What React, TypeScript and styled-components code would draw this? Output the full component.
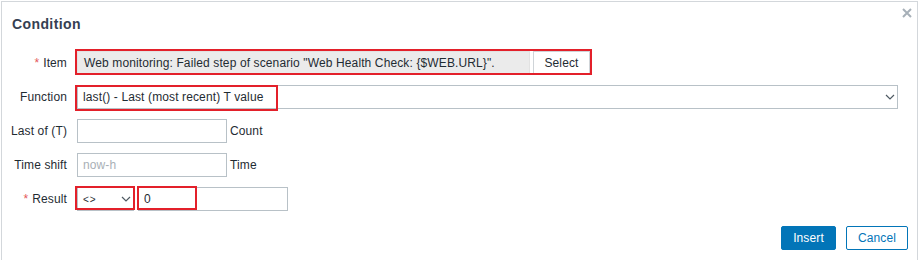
import * as React from "react";
import styled, { createGlobalStyle } from "styled-components";

const GlobalStyle = createGlobalStyle`
  body {
    margin: 0;
    background: #ffffff;
    font-family: "Liberation Sans", Arial, sans-serif;
    font-size: 12px;
    letter-spacing: 0.12px;
    color: #1f2c33;
  }
`;

const Dialog = styled.div`
  box-sizing: border-box;
  width: 917px;
  height: 259px;
  margin: 1px 0 0 1px;
  border: 1px solid #d3d7db;
  border-bottom: none;
  background: #ffffff;
`;

const Header = styled.div`
  display: flex;
  justify-content: space-between;
  align-items: flex-start;
  padding: 0 5px 0 10px;
`;

const Title = styled.h4`
  margin: 0;
  padding-top: 14px;
  font-size: 14px;
  line-height: 16px;
  font-weight: bold;
  letter-spacing: 0.4px;
  color: #354052;
`;

const Close = styled.button`
  display: flex;
  margin-top: 6px;
  padding: 0;
  border: none;
  background: transparent;
  cursor: pointer;
`;

const Form = styled.div`
  display: grid;
  grid-template-columns: 65px 1fr;
  column-gap: 10px;
  row-gap: 10px;
  margin-top: 19px;
  padding-right: 19px;
`;

const Label = styled.label`
  display: flex;
  align-items: center;
  justify-content: flex-end;
  height: 24px;
  white-space: nowrap;
`;

const Req = styled.span`
  color: #e45959;
  margin-right: 4px;
`;

const Field = styled.div`
  display: flex;
  align-items: center;
  gap: 3px;
  height: 24px;
`;

const Group = styled.div<{ $gap?: number }>`
  position: relative;
  display: flex;
  gap: ${(p) => p.$gap ?? 0}px;
  height: 24px;
`;

const Mark = styled.span<{ $l: number; $t: number; $w: number; $h: number }>`
  position: absolute;
  left: ${(p) => p.$l}px;
  top: ${(p) => p.$t}px;
  width: ${(p) => p.$w}px;
  height: ${(p) => p.$h}px;
  box-sizing: border-box;
  border: 2px solid #e3202a;
  pointer-events: none;
`;

const Input = styled.input<{ $w: number }>`
  box-sizing: border-box;
  width: ${(p) => p.$w}px;
  height: 24px;
  margin: 0;
  padding: 0 5px;
  border: 1px solid #b8c1c7;
  background: #ffffff;
  font-family: inherit;
  font-size: 12px;
  letter-spacing: inherit;
  color: #1f2c33;
  outline: none;
  &::placeholder {
    color: #a9b0b6;
  }
`;

const ReadOnly = styled.div`
  box-sizing: border-box;
  width: 453px;
  height: 24px;
  display: flex;
  align-items: center;
  padding: 0 6px;
  background: #ebebeb;
  border: 1px solid #e2e2e2;
  white-space: nowrap;
  overflow: hidden;
`;

const AltButton = styled.button`
  box-sizing: border-box;
  width: 57px;
  height: 24px;
  margin: 0;
  padding: 0;
  border: 1px solid #cfd4d8;
  background: #ffffff;
  font-family: inherit;
  font-size: 12px;
  letter-spacing: inherit;
  color: #1f2c33;
`;

const Select = styled.div<{ $w?: number }>`
  box-sizing: border-box;
  ${(p) => (p.$w ? `width: ${p.$w}px;` : "flex: 1;")}
  height: 24px;
  display: flex;
  align-items: center;
  justify-content: space-between;
  padding: 0 2px 0 5px;
  border: 1px solid #b8c1c7;
  background: #ffffff;
`;

const Small = styled.span`
  font-size: 10px;
  letter-spacing: 1px;
`;

const Unit = styled.span`
  font-size: 12px;
`;

const Footer = styled.div`
  display: flex;
  justify-content: flex-end;
  gap: 10px;
  margin-top: 15px;
  padding-right: 9px;
`;

const Button = styled.button<{ $primary?: boolean; $w: number }>`
  box-sizing: border-box;
  width: ${(p) => p.$w}px;
  height: 24px;
  padding: 0;
  border: 1px solid #0275b8;
  border-radius: 2px;
  background: ${(p) => (p.$primary ? "#0275b8" : "#ffffff")};
  color: ${(p) => (p.$primary ? "#ffffff" : "#0275b8")};
  font-family: inherit;
  font-size: 12px;
  letter-spacing: inherit;
`;

const Chevron = () => (
  <svg width="10" height="6" viewBox="0 0 10 6">
    <path d="M1 1 L5 5 L9 1" fill="none" stroke="#4f5a63" strokeWidth="1.2" />
  </svg>
);

const App = () => {
  return (
    <>
      <GlobalStyle />
      <Dialog>
        <Header>
          <Title>Condition</Title>
          <Close aria-label="Close">
            <svg width="10" height="10" viewBox="0 0 10 10">
              <path d="M1 1 L9 9 M9 1 L1 9" stroke="#a7b0b8" strokeWidth="2" />
            </svg>
          </Close>
        </Header>
        <Form>
          <Label>
            <Req>*</Req>Item
          </Label>
          <Field>
            <Group $gap={3}>
              <ReadOnly>
                Web monitoring: Failed step of scenario "Web Health Check: {"{$WEB.URL}"}".
              </ReadOnly>
              <AltButton>Select</AltButton>
              <Mark $l={-2} $t={-2} $w={517} $h={26} />
            </Group>
          </Field>

          <Label>Function</Label>
          <Group>
            <Select>
              <span>last() - Last (most recent) T value</span>
              <Chevron />
            </Select>
            <Mark $l={-2} $t={0} $w={203} $h={26} />
          </Group>

          <Label>Last of (T)</Label>
          <Field>
            <Input $w={150} />
            <Unit>Count</Unit>
          </Field>

          <Label>Time shift</Label>
          <Field>
            <Input $w={150} placeholder="now-h" />
            <Unit>Time</Unit>
          </Field>

          <Label>
            <Req>*</Req>Result
          </Label>
          <Field>
            <Group $gap={4}>
              <Select $w={57}>
                <Small>&lt;&gt;</Small>
                <Chevron />
              </Select>
              <Input $w={150} defaultValue="0" />
              <Mark $l={-2} $t={-1} $w={60} $h={24} />
              <Mark $l={60} $t={-1} $w={60} $h={24} />
            </Group>
          </Field>
        </Form>
        <Footer>
          <Button $primary $w={55}>Insert</Button>
          <Button $w={62}>Cancel</Button>
        </Footer>
      </Dialog>
    </>
  );
};

export default App;
